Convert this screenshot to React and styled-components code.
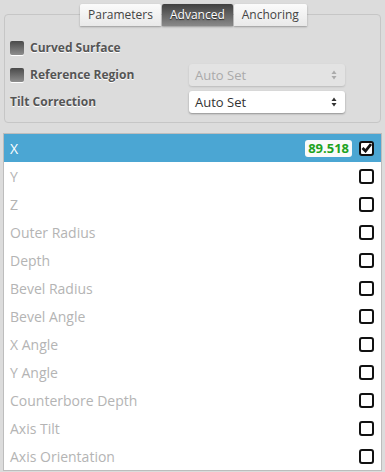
import React from "react";
import styled, { createGlobalStyle } from "styled-components";

const GlobalStyle = createGlobalStyle`
  html, body {
    margin: 0;
    padding: 0;
    background: #dcdcdc;
    font-family: "Open Sans", "DejaVu Sans", sans-serif;
  }
`;

const rows = [
  "X",
  "Y",
  "Z",
  "Outer Radius",
  "Depth",
  "Bevel Radius",
  "Bevel Angle",
  "X Angle",
  "Y Angle",
  "Counterbore Depth",
  "Axis Tilt",
  "Axis Orientation",
];

const App = () => {
  return (
    <Page>
      <GlobalStyle />
      <Fieldset>
        <Tabs>
          <Tab>Parameters</Tab>
          <Tab active>Advanced</Tab>
          <Tab>Anchoring</Tab>
        </Tabs>
        <FormRow>
          <Label>
            <GrayBox />
            Curved Surface
          </Label>
        </FormRow>
        <FormRow>
          <Label>
            <GrayBox />
            Reference Region
          </Label>
          <Select disabled>
            Auto Set
            <Arrows />
          </Select>
        </FormRow>
        <FormRow>
          <Label>Tilt Correction</Label>
          <Select>
            Auto Set
            <Arrows />
          </Select>
        </FormRow>
      </Fieldset>

      <List>
        {rows.map((name, i) => (
          <Row key={name} selected={i === 0}>
            <RowName>{name}</RowName>
            {i === 0 && <Value>89.518</Value>}
            <Check>
              {i === 0 && (
                <svg width="11" height="10" viewBox="0 0 11 10">
                  <path
                    d="M1.5 5 L4.5 8 L10 1"
                    fill="none"
                    stroke="#111"
                    strokeWidth="2.8"
                  />
                </svg>
              )}
            </Check>
          </Row>
        ))}
      </List>
    </Page>
  );
};

const Arrows = () => (
  <ArrowIcon width="6" height="10" viewBox="0 0 6 10">
    <path d="M3 0.5 L5.5 4 L0.5 4 Z" fill="currentColor" />
    <path d="M3 9.5 L5.5 6 L0.5 6 Z" fill="currentColor" />
  </ArrowIcon>
);

const Page = styled.div`
  width: 385px;
  height: 472px;
  overflow: hidden;
  padding-top: 3px;
  box-sizing: border-box;
`;

const Fieldset = styled.div`
  position: relative;
  margin: 11px 4px 0 4px;
  height: 109px;
  border: 1px solid #c6c6c6;
  border-radius: 4px;
  box-sizing: border-box;
  padding: 19px 0 0 5px;
`;

const Tabs = styled.div`
  position: absolute;
  top: -11px;
  left: 75px;
  display: flex;
  gap: 1px;
`;

const Tab = styled.div`
  height: 22px;
  line-height: 22px;
  padding: 0 8px;
  font-size: 12px;
  border-radius: 2px 2px 0 0;
  color: ${({ active }) => (active ? "#fff" : "#444")};
  text-shadow: ${({ active }) => (active ? "0 1px 1px #222" : "none")};
  background: ${({ active }) =>
    active
      ? "linear-gradient(#404040, #8a8a8a)"
      : "linear-gradient(#fbfbfb, #e9e9e9)"};
  box-shadow: 0 1px 2px rgba(0, 0, 0, 0.3);
`;

const FormRow = styled.div`
  display: flex;
  align-items: center;
  height: 27px;
`;

const Label = styled.div`
  width: 179px;
  display: flex;
  align-items: center;
  gap: 6px;
  font-size: 12px;
  font-weight: bold;
  color: #555;
  text-shadow: 0 1px 0 #fff;
`;

const GrayBox = styled.span`
  width: 14px;
  height: 14px;
  border-radius: 2px;
  background: linear-gradient(#4a4a4a, #8e8e8e);
  box-shadow: 0 1px 0 #fff;
`;

const Select = styled.div`
  width: 156px;
  height: 22px;
  box-sizing: border-box;
  display: flex;
  align-items: center;
  justify-content: space-between;
  padding: 0 8px 0 6px;
  font-size: 13px;
  border-radius: 3px;
  color: ${({ disabled }) => (disabled ? "#aaa" : "#333")};
  background: ${({ disabled }) => (disabled ? "#e3e3e3" : "#fff")};
  box-shadow: 0 1px 2px rgba(0, 0, 0, ${({ disabled }) => (disabled ? 0.15 : 0.35)});
`;

const ArrowIcon = styled.svg`
  color: inherit;
`;

const List = styled.div`
  margin: 10px 3px 0 3px;
  border: 1px solid #bdbdbd;
  background: #fff;
`;

const Row = styled.div`
  height: 28px;
  display: flex;
  align-items: center;
  padding: 0 7px 0 6px;
  background: ${({ selected }) => (selected ? "#4ba6d3" : "#fff")};
  color: ${({ selected }) => (selected ? "#fff" : "#b4b4b4")};
`;

const RowName = styled.div`
  flex: 1;
  font-size: 14px;
`;

const Value = styled.div`
  height: 17px;
  line-height: 17px;
  padding: 0 3px;
  margin-right: 7px;
  border-radius: 3px;
  background: #fafafa;
  color: #1fa31f;
  font-weight: bold;
  font-size: 13px;
`;

const Check = styled.div`
  width: 15px;
  height: 15px;
  box-sizing: border-box;
  border: 2px solid #111;
  border-radius: 3px;
  background: #fff;
  display: flex;
  align-items: center;
  justify-content: center;
`;

export default App;
